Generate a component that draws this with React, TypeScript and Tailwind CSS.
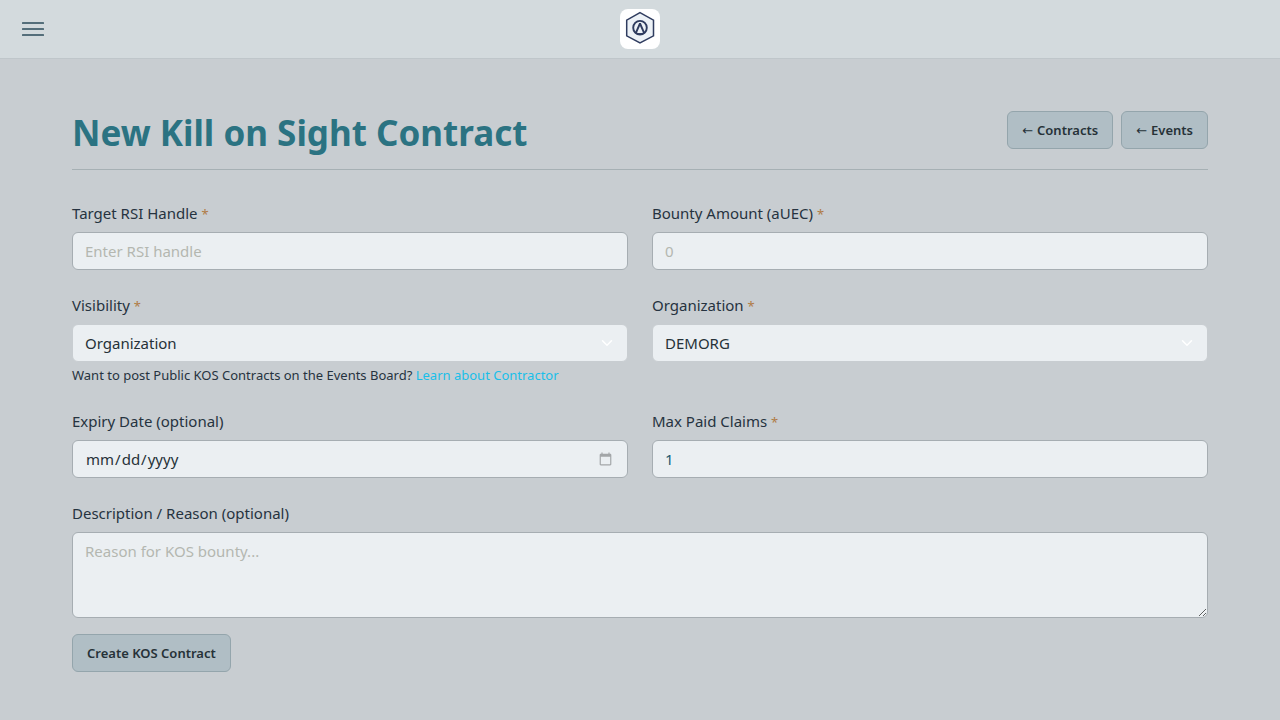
import type { ReactNode } from 'react';

const field =
  'block h-[38px] w-full rounded-md border border-[#a6adb2] bg-[#ebeff2] px-3 text-[15px] leading-6 placeholder:text-[#b4b7b0] placeholder:opacity-100';
const selectField =
  'block h-[38px] w-full appearance-none rounded-md border border-[#c8cdd1] bg-[#ebeff2] px-3 pr-10 text-[15px] leading-6 text-[#263238]';
const btn =
  'inline-flex h-[38px] items-center rounded-md border border-[#94a5ac] bg-[#b0bec5] px-3.5 pt-0.5 text-[13px] font-semibold text-[#263238] hover:bg-[#a4b3bb]';

export default function App() {
  return (
    <div className="min-h-screen bg-[#c8cdd1] font-['Noto_Sans','Open_Sans',sans-serif] text-[#263340]">
      <TopBar />

      <main className="px-[72px] pt-12 pb-12">
        <header className="flex items-center justify-between border-b border-[#a6b0b4] pb-4">
          <h1 className="pt-1.5 text-[35px] leading-10 font-bold text-[#2b7382]">
            New Kill on Sight Contract
          </h1>
          <div className="flex gap-2">
            <BackLink href="#contracts">Contracts</BackLink>
            <BackLink href="#events">Events</BackLink>
          </div>
        </header>

        <form className="mt-8" onSubmit={(e) => e.preventDefault()}>
          <div className="grid grid-cols-2 gap-6">
            <Field id="handle" label="Target RSI Handle" required>
              <input id="handle" type="text" placeholder="Enter RSI handle" className={field} />
            </Field>

            <Field id="bounty" label="Bounty Amount (aUEC)" required>
              <input id="bounty" type="number" min={0} placeholder="0" className={field} />
            </Field>

            <Field id="visibility" label="Visibility" required>
              <Select id="visibility" options={['Organization', 'Private']} />
              <p className="mt-1 pb-0.5 text-[13px] leading-[18px]">
                Want to post Public KOS Contracts on the Events Board?{' '}
                <a href="#contractor" className="text-[#19bfe9]">
                  Learn about Contractor
                </a>
              </p>
            </Field>

            <Field id="organization" label="Organization" required>
              <Select id="organization" options={['DEMORG']} />
            </Field>

            <Field id="expiry" label="Expiry Date (optional)">
              <input
                id="expiry"
                type="date"
                className={`${field} text-[#263238] [&::-webkit-calendar-picker-indicator]:opacity-30`}
              />
            </Field>

            <Field id="claims" label="Max Paid Claims" required>
              <input
                id="claims"
                type="number"
                min={1}
                defaultValue={1}
                className={`${field} text-[#1b5c70]`}
              />
            </Field>

            <div className="col-span-2">
              <Field id="description" label="Description / Reason (optional)">
                <textarea
                  id="description"
                  placeholder="Reason for KOS bounty..."
                  className="block h-[86px] w-full resize-y rounded-md border border-[#a6adb2] bg-[#ebeff2] px-3 py-1.5 text-[15px] leading-6 text-[#1b5c70] placeholder:text-[#b4b7b0] placeholder:opacity-100"
                />
              </Field>
            </div>
          </div>

          <button type="submit" className={`${btn} mt-4`}>
            Create KOS Contract
          </button>
        </form>
      </main>
    </div>
  );
}

function TopBar() {
  return (
    <nav className="grid grid-cols-[1fr_auto_1fr] items-center border-b border-[#bfc6ca] bg-[#d3dadd] py-[9px]">
      <button type="button" aria-label="Open menu" className="ml-[22px] w-fit text-[#546e7a]">
        <svg width="22" height="14" viewBox="0 0 22 14" fill="currentColor">
          <rect width="22" height="2" rx="0.5" />
          <rect y="6" width="22" height="2" rx="0.5" />
          <rect y="12" width="22" height="2" rx="0.5" />
        </svg>
      </button>
      <a href="#home" aria-label="Home" className="block rounded-[8px] bg-white">
        <Logo />
      </a>
    </nav>
  );
}

function Logo() {
  return (
    <svg width="40" height="40" viewBox="0 0 40 40" fill="none" stroke="#2f3c5f">
      <path d="M20 3.7 33.5 11.2v15.6L20 34 6.7 26.8V11.2Z" fill="#edf2f7" strokeWidth="1.5" />
      <circle cx="20" cy="18.7" r="6.8" strokeWidth="1.9" />
      <path d="m15.7 24.3 4.3-9.8 4.3 9.8" strokeWidth="1.9" strokeLinejoin="bevel" />
      <path d="M17.5 24.8h5" strokeWidth="1.4" />
    </svg>
  );
}

function BackLink({ href, children }: { href: string; children: ReactNode }) {
  return (
    <a href={href} className={`${btn} gap-1`}>
      <span className="font-['DejaVu_Sans'] font-normal">←</span>
      {children}
    </a>
  );
}

function Field({
  id,
  label,
  required,
  children,
}: {
  id: string;
  label: string;
  required?: boolean;
  children: ReactNode;
}) {
  return (
    <div>
      <label htmlFor={id} className="mb-2 block text-[15px] leading-[22px]">
        {label} {required && <span className="text-[13px] leading-none text-[#b07b45]">*</span>}
      </label>
      {children}
    </div>
  );
}

function Select({ id, options }: { id: string; options: string[] }) {
  return (
    <div className="relative">
      <select id={id} className={selectField}>
        {options.map((o) => (
          <option key={o}>{o}</option>
        ))}
      </select>
      <svg
        className="pointer-events-none absolute top-[13px] right-[15px]"
        width="12"
        height="12"
        viewBox="0 0 16 16"
        fill="none"
        stroke="#fff"
        strokeWidth="2"
        strokeLinecap="round"
        strokeLinejoin="round"
      >
        <path d="m2 5 6 6 6-6" />
      </svg>
    </div>
  );
}
